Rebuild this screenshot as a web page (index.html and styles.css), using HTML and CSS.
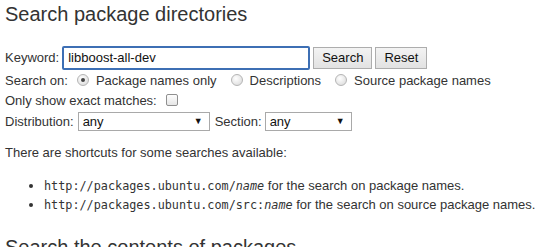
FILE: index.html
```html
<!DOCTYPE html>
<html lang="en">
<head>
  <meta charset="UTF-8" />
  <title>Ubuntu – Package Search</title>
  <link rel="stylesheet" href="styles.css">
</head>
<body>

  <h1>Search package directories</h1>

  <form class="search-form">
    <div class="row keyword-row">
      <label for="kw">Keyword:</label>
      <input id="kw" class="kw-input" type="text" value="libboost-all-dev">
      <button type="button" class="btn">Search</button>
      <button type="button" class="btn">Reset</button>
    </div>

    <div class="row">
      <span>Search on:</span>
      <span class="radio checked"></span><span class="opt">Package names only</span>
      <span class="radio"></span><span class="opt">Descriptions</span>
      <span class="radio"></span><span class="opt">Source package names</span>
    </div>

    <div class="row">
      <span>Only show exact matches:</span>
      <span class="checkbox"></span>
    </div>

    <div class="row dist-row">
      <span>Distribution:</span>
      <span class="select dist">any<span class="arrow">▼</span></span>
      <span>Section:</span>
      <span class="select section">any<span class="arrow">▼</span></span>
    </div>
  </form>

  <p class="note">There are shortcuts for some searches available:</p>

  <ul class="shortcuts">
    <li><code>http://packages.ubuntu.com/<em>name</em></code> for the search on package names.</li>
    <li><code>http://packages.ubuntu.com/src:<em>name</em></code> for the search on source package names.</li>
  </ul>

  <h1 class="second">Search the contents of packages</h1>

</body>
</html>
```

FILE: styles.css
```css
html, body {
  margin: 0;
  padding: 0;
  overflow: hidden;
}

body {
  background: #fff;
  color: #333;
  font-family: "Liberation Sans", Arial, sans-serif;
  font-size: 13px;
  padding-left: 5px;
}

h1 {
  font-weight: normal;
  font-size: 20px;
  margin: 0;
  padding-top: 2px;
  line-height: 24px;
  color: #333;
}

.search-form {
  margin-top: 19px;
}

.row {
  display: flex;
  align-items: center;
  height: 20px;
  white-space: nowrap;
}

.keyword-row {
  height: 25px;
}

.kw-input {
  width: 236px;
  height: 20px;
  padding: 0 4px;
  margin: 0 3px;
  border: 2px solid #3d6fb4;
  border-radius: 2px;
  font-family: inherit;
  font-size: 13px;
  color: #111;
  outline: none;
  box-sizing: content-box;
}

.btn {
  height: 22px;
  padding: 0 8px;
  margin-right: 3px;
  font-family: inherit;
  font-size: 13px;
  color: #111;
  background: linear-gradient(#f3f3f3, #e2e2e2);
  border: 1px solid #adadad;
  border-radius: 0;
}

.radio {
  display: inline-block;
  width: 10px;
  height: 10px;
  border-radius: 50%;
  border: 1px solid #b5b5b5;
  background: radial-gradient(circle at 40% 35%, #fff, #d6d6d6);
  margin: 0 7px 0 9px;
  position: relative;
}

.radio.checked::after {
  content: "";
  position: absolute;
  left: 3px;
  top: 3px;
  width: 4px;
  height: 4px;
  border-radius: 50%;
  background: #444;
}

.opt {
  margin-right: 5px;
}

.checkbox {
  display: inline-block;
  width: 10px;
  height: 10px;
  border: 1px solid #8f8f8f;
  border-radius: 2px;
  background: linear-gradient(#fdfdfd, #e6e6e6);
  margin-left: 9px;
}

.dist-row {
  height: 22px;
}

.select {
  display: inline-flex;
  align-items: center;
  justify-content: space-between;
  height: 17px;
  padding: 0 6px 0 4px;
  margin: 0 5px 0 4px;
  border: 1px solid #a9a9a9;
  background: #fff;
  color: #111;
  box-sizing: content-box;
}

.select.dist {
  width: 120px;
}

.select.section {
  width: 75px;
  margin-left: 3px;
}

.arrow {
  font-size: 9px;
  color: #111;
}

.note {
  margin: 13px 0 0;
  line-height: 16px;
}

.shortcuts {
  margin: 15px 0 0;
  padding-left: 39px;
  line-height: 19px;
  white-space: nowrap;
}

.shortcuts li {
  height: 19px;
}

.shortcuts code {
  font-family: "DejaVu Sans Mono", monospace;
  font-size: 11.8px;
  line-height: 1;
}

.shortcuts em {
  font-style: italic;
}

h1.second {
  margin-top: 19px;
}
```
